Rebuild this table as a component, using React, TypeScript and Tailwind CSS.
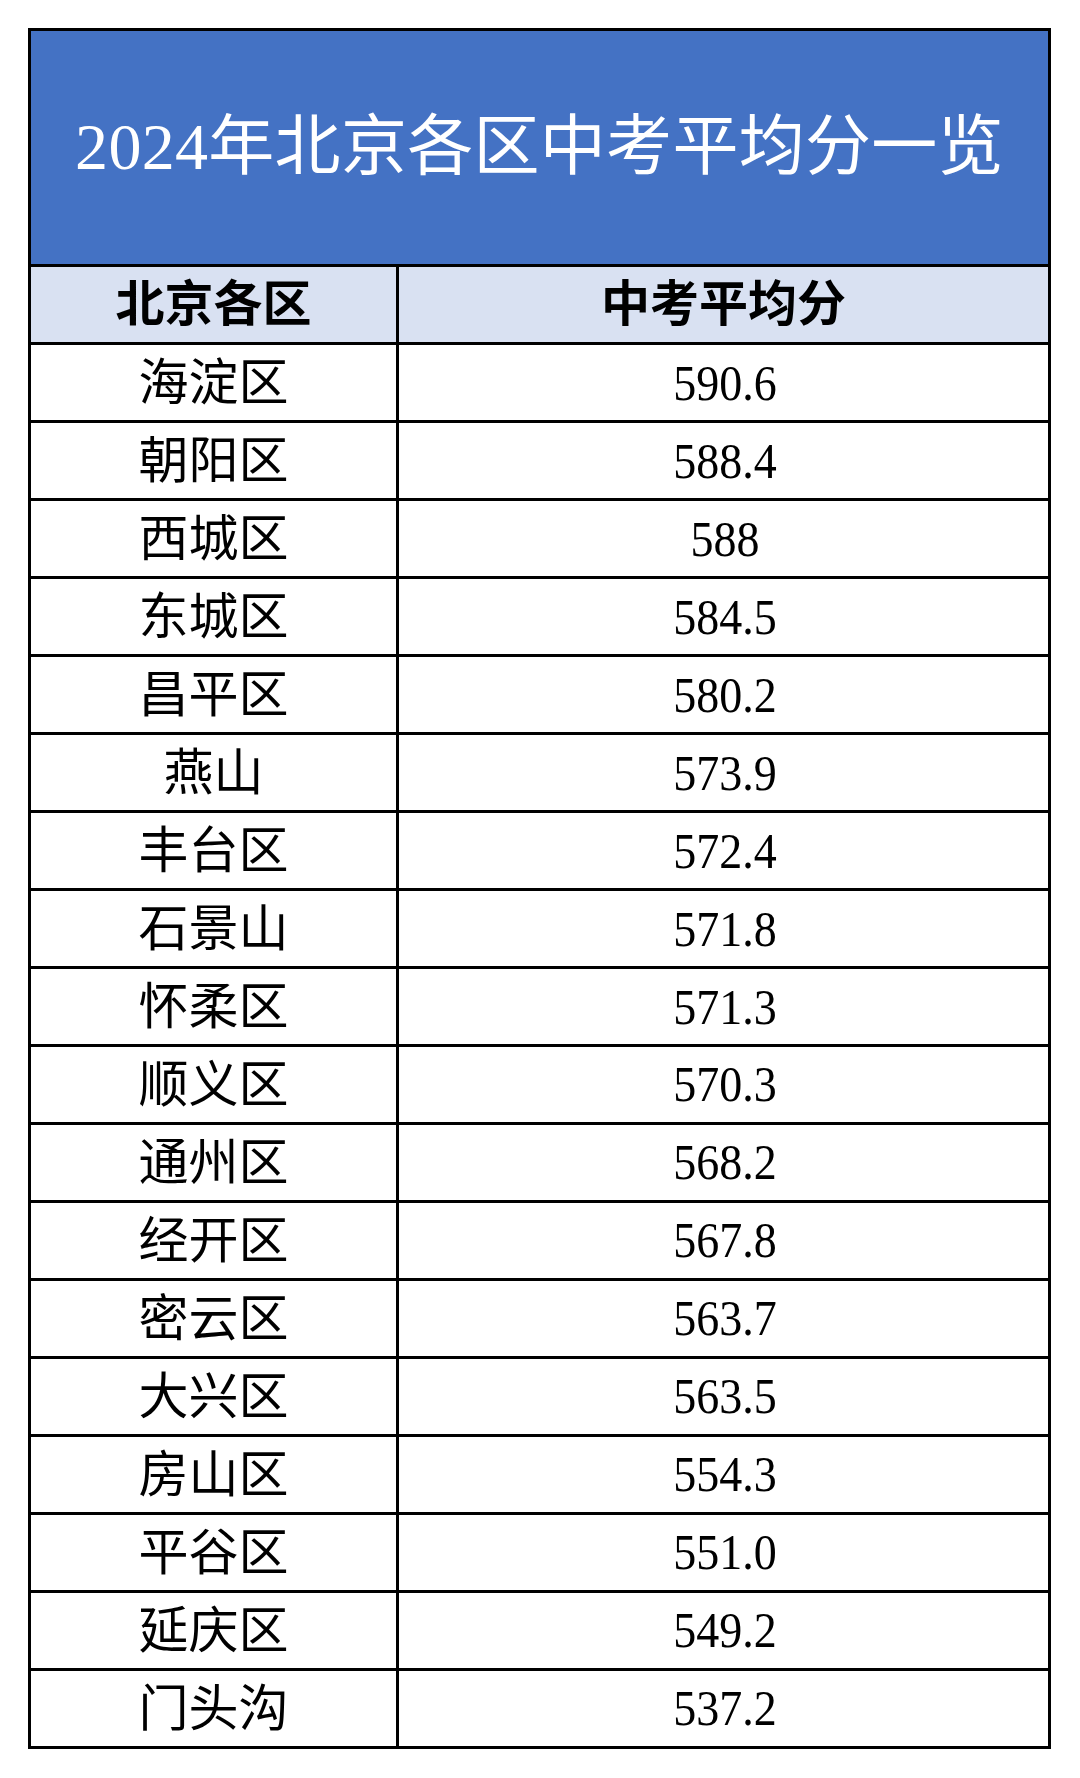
const ROWS: { district: string; score: string }[] = [
  { district: "海淀区", score: "590.6" },
  { district: "朝阳区", score: "588.4" },
  { district: "西城区", score: "588" },
  { district: "东城区", score: "584.5" },
  { district: "昌平区", score: "580.2" },
  { district: "燕山", score: "573.9" },
  { district: "丰台区", score: "572.4" },
  { district: "石景山", score: "571.8" },
  { district: "怀柔区", score: "571.3" },
  { district: "顺义区", score: "570.3" },
  { district: "通州区", score: "568.2" },
  { district: "经开区", score: "567.8" },
  { district: "密云区", score: "563.7" },
  { district: "大兴区", score: "563.5" },
  { district: "房山区", score: "554.3" },
  { district: "平谷区", score: "551.0" },
  { district: "延庆区", score: "549.2" },
  { district: "门头沟", score: "537.2" },
];

const serif =
  "font-['Liberation_Serif','Noto_Sans_CJK_SC',serif]";

export default function App() {
  return (
    <div className="min-h-[1778px] w-[1080px] bg-white pt-[28px] pl-[28px]">
      <div className={`w-[1023px] border-[3px] border-black ${serif}`}>
        <div className="flex h-[236px] items-center justify-center border-b-[3px] border-black bg-[#4472c4] pb-[2px]">
          <h1 className="text-[66px] font-normal leading-none tracking-[0.3px] text-white">
            2024年北京各区中考平均分一览
          </h1>
        </div>

        <div className="grid grid-cols-[368px_1fr] border-b-[3px] border-black bg-[#d9e1f2]">
          <div className="flex h-[75px] items-center justify-center border-r-[3px] border-black text-[49px] font-bold text-black">
            北京各区
          </div>
          <div className="flex h-[75px] items-center justify-center text-[49px] font-bold text-black">
            中考平均分
          </div>
        </div>

        {ROWS.map((r, i) => (
          <div
            key={r.district}
            className={`grid grid-cols-[368px_1fr] ${
              i < ROWS.length - 1 ? "border-b-[3px] border-black" : ""
            }`}
          >
            <div className="flex h-[75px] items-center justify-center border-r-[3px] border-black text-[50px] leading-none text-black">
              {r.district}
            </div>
            <div className="flex h-[75px] items-center justify-center pl-[3px] text-[46px] leading-none text-black">
              <span className="inline-block scale-y-110">{r.score}</span>
            </div>
          </div>
        ))}
      </div>
    </div>
  );
}
